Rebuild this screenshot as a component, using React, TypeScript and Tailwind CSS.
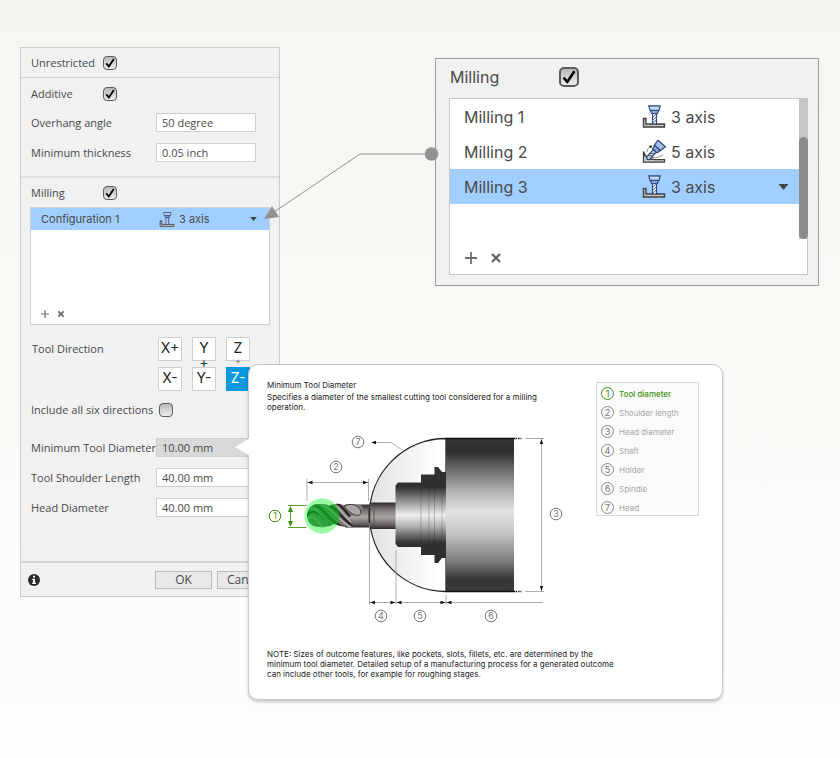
import React from "react";

const lucida = "font-['Open_Sans','Noto_Sans',sans-serif]";
const inter = "font-['Inter','Liberation_Sans',sans-serif]";

function ThreeAxisIcon({ className }: { className: string }) {
  return (
    <svg viewBox="0 0 24 23" className={className} aria-hidden="true">
      <path d="M1.500 13.500h2.500v5.500h18.500v3H1.500z" fill="#c9c9c9" stroke="#404040" strokeWidth="1.400" />
      <path d="M10.500 8h4v11h-4z" fill="#e9eef8" stroke="#34497a" strokeWidth="1.200" />
      <path d="M11 18l3-3M11 15l3-3M11 12l3-3" stroke="#3c5586" strokeWidth="0.800" />
      <path d="M8.500 5.500h8l-1 3h-6z" fill="#86a9d9" stroke="#34497a" strokeWidth="1.200" />
      <path d="M6.800 0.800h11.400l-1.200 4.700H8z" fill="#a3c1e8" stroke="#34497a" strokeWidth="1.200" />
      <path d="M8 2.800h9" stroke="#dfeafa" />
    </svg>
  );
}

function FiveAxisIcon({ className }: { className: string }) {
  return (
    <svg viewBox="0 0 24 23" className={className} aria-hidden="true">
      <path d="M1.500 11.500c1 5 5 8 11 8.200h10v2.500H1.500z" fill="#d0d0d0" stroke="#404040" strokeWidth="1.300" />
      <path d="M10 17.500c5 .500 9-.500 11-3M5 12c0-3 2-5 5-6" fill="none" stroke="#777" strokeWidth="0.800" />
      <path d="M7.500 5.500h2.200v2.200H7.500z" fill="#222" />
      <g transform="translate(5.500 19) rotate(42)">
        <path d="M-2-11h4V-1l-2 1.500L-2-1z" fill="#c9d8ef" stroke="#2d456f" strokeWidth="1.200" />
        <path d="M-1.500-3l3-3M-1.500-6l3-3" stroke="#2d456f" strokeWidth="0.800" />
        <path d="M-4-15h8l-1 4h-6z" fill="#86a9d9" stroke="#2d456f" strokeWidth="1.200" />
        <path d="M-5-21H5l-1 6h-8z" fill="#a3c1e8" stroke="#2d456f" strokeWidth="1.200" />
      </g>
    </svg>
  );
}

function Check({ id, checked, large }: { id: string; checked?: boolean; large?: boolean }) {
  return (
    <span className={large ? "grid size-5" : "grid size-[14px]"}>
      <input
        id={id}
        type="checkbox"
        defaultChecked={checked}
        className={
          "peer size-full appearance-none border-[#5c5c5c] bg-linear-to-b from-[#b9b9b9] to-[#ededed] [grid-area:1/1] " +
          (large ? "rounded-[5px] border-2" : "rounded-[4px] border")
        }
      />
      <svg viewBox="0 0 14 14" className="pointer-events-none invisible size-full [grid-area:1/1] peer-checked:visible" aria-hidden="true">
        <path d="M3.200 7.400l2.600 3L10.800 3" fill="none" stroke="#000" strokeWidth="1.800" />
      </svg>
    </span>
  );
}

function Field({ id, label, value, muted }: { id: string; label: string; value: string; muted?: boolean }) {
  return (
    <div className="flex items-center">
      <label htmlFor={id} className="w-[125px] shrink-0 whitespace-nowrap">{label}</label>
      <input
        id={id}
        defaultValue={value}
        className={"h-[19px] w-[100px] border border-[#cfcfcf] px-[5px] " + (muted ? "bg-[#d9d9d9]" : "bg-white")}
      />
    </div>
  );
}

function Caret({ className }: { className: string }) {
  return (
    <svg viewBox="0 0 10 6" className={className} aria-hidden="true">
      <path d="M0 0h10L5 6z" fill="#444" />
    </svg>
  );
}

function AddRemove({ large }: { large?: boolean }) {
  const size = large ? "size-3" : "size-2";
  return (
    <div className={large ? "flex gap-[13px]" : "flex gap-2"}>
      <button type="button" aria-label="Add">
        <svg viewBox="0 0 12 12" className={size}><path d="M6 0v12M0 6h12" stroke="#707070" strokeWidth="1.800" /></svg>
      </button>
      <button type="button" aria-label="Remove">
        <svg viewBox="0 0 12 12" className={size}><path d="M2 2l8 8M10 2l-8 8" stroke="#666" strokeWidth="2.400" /></svg>
      </button>
    </div>
  );
}

const directions = [
  { id: "x+", text: <>X+</> },
  { id: "y+", text: <>Y<span className="block text-[#1d4d35]">+</span></> },
  { id: "z+", text: <>Z<span className="block text-[8px] leading-[12px] text-[#555]">+</span></> },
  { id: "x-", text: <>X-</> },
  { id: "y-", text: <>Y-</> },
];

function SettingsPanel() {
  return (
    <form className={`w-[260px] shrink-0 border border-[#cbcbcb] bg-[#f1f1f1] text-[11px] leading-4 text-[#4a4a4a] ${lucida}`}>
      <section className="flex h-[30px] items-center border-b border-[#d4d4d4] px-[10px]">
        <label htmlFor="unrestricted" className="w-[72px]">Unrestricted</label>
        <Check id="unrestricted" checked />
      </section>

      <section className="flex flex-col gap-[11px] border-b-2 border-[#dfdfdf] px-[10px] pt-2 pb-[14px]">
        <div className="flex items-center">
          <label htmlFor="additive" className="w-[72px]">Additive</label>
          <Check id="additive" checked />
        </div>
        <Field id="overhang" label="Overhang angle" value="50 degree" />
        <Field id="thickness" label="Minimum thickness" value="0.05 inch" />
      </section>

      <section className="px-[9px] pt-[7px]">
        <div className="flex items-center px-px">
          <label htmlFor="milling" className="w-[72px]">Milling</label>
          <Check id="milling" checked />
        </div>
        <div className={`mt-[6px] flex h-[118px] flex-col justify-between border border-[#cfcfcf] bg-white ${inter}`}>
          <div className="flex h-[22px] items-center bg-[#a0cfff] pr-[12px] pl-[10px]">
            <span className="w-[118px]">Configuration 1</span>
            <ThreeAxisIcon className="mr-1 h-[15px] w-4" />
            <span className="flex-1">3 axis</span>
            <button type="button" aria-label="Choose axis"><Caret className="h-1 w-[7px]" /></button>
          </div>
          <div className="px-[10px] pb-[6px]"><AddRemove /></div>
        </div>

        <div role="group" aria-labelledby="direction" className="mt-[12px] flex px-[2px]">
          <span id="direction" className="w-[126px] pt-1">Tool Direction</span>
          <div className={`grid grid-cols-[24px_24px_24px] gap-x-[10px] gap-y-[6px] text-[14px] leading-[14px] text-[#222] ${inter}`}>
            {directions.map((d) => (
              <button key={d.id} type="button" className="flex h-6 w-6 flex-col border border-[#cfcfcf] bg-white pt-[3px] text-center whitespace-nowrap">
                <span className="w-full">{d.text}</span>
              </button>
            ))}
            <button type="button" className="flex h-6 w-6 flex-col bg-[#0a98e0] pt-[4px] text-center text-white">
              <span className="w-full">Z-</span>
            </button>
          </div>
        </div>

        <div className="mt-[11px] flex items-center px-px">
          <label htmlFor="six" className="w-[128px] whitespace-nowrap">Include all six directions</label>
          <Check id="six" />
        </div>

        <div className="mt-[20px] flex flex-col gap-[11px] px-px pb-[44px]">
          <Field id="diameter" label="Minimum Tool Diameter" value="10.00 mm" muted />
          <Field id="shoulder" label="Tool Shoulder Length" value="40.00 mm" />
          <Field id="head" label="Head Diameter" value="40.00 mm" />
        </div>
      </section>

      <footer className="flex h-[35px] items-center border-t-2 border-[#d4d4d4] pl-[7px]">
        <svg viewBox="0 0 12 12" className="size-3" role="img" aria-label="Information">
          <circle cx="6" cy="6" r="6" fill="#2b2b2b" />
          <path d="M5 1.800h2v1.800H5zM4.200 4.800H7v3.800h.900V10H4.200V8.600H5V6.100h-.800z" fill="#fff" />
        </svg>
        <button type="button" className="ml-[115px] h-[18px] w-[57px] border border-[#bdbdbd] bg-[#e8e8e8] text-xs leading-4">OK</button>
        <button type="button" className="ml-[5px] h-[18px] w-[57px] border border-[#bdbdbd] bg-[#e8e8e8] text-xs leading-4">Cancel</button>
      </footer>
    </form>
  );
}

const millings = [
  { name: "Milling 1", axis: "3 axis" },
  { name: "Milling 2", axis: "5 axis" },
  { name: "Milling 3", axis: "3 axis" },
];

function MillingPanel() {
  return (
    <section className={`mt-[11px] ml-[155px] min-w-[384px] flex-1 border border-[#9b9b9b] bg-[#f1f1f1] pr-[10px] pb-[10px] pl-[13px] text-base text-[#4a4a4a] ${inter}`}>
      <div className="flex h-[39px] items-center pb-1">
        <label htmlFor="milling-detail" className="w-[110px] px-px">Milling</label>
        <Check id="milling-detail" checked large />
      </div>
      <div className="flex h-[177px] border border-r-0 border-[#c8c8c8] bg-white">
        <div className="flex flex-1 flex-col">
          <ul>
            {millings.map((m) => (
              <li
                key={m.name}
                className={"flex h-[35px] items-center pr-[10px] pl-[14px] " + (m.name === "Milling 3" ? "bg-[#a0cfff]" : "")}
              >
                <span className="w-[178px]">{m.name}</span>
                {m.axis === "5 axis" ? <FiveAxisIcon className="h-[23px] w-6" /> : <ThreeAxisIcon className="h-[23px] w-6" />}
                <span className="ml-[5px] flex-1">{m.axis}</span>
                {m.name === "Milling 3" && (
                  <button type="button" aria-label="Choose axis"><Caret className="h-[6px] w-[11px]" /></button>
                )}
              </li>
            ))}
          </ul>
          <div className="mt-auto px-[15px] pb-[10px]"><AddRemove large /></div>
        </div>
        <div className="flex w-[9px] flex-col border-r border-[#c8c8c8]">
          <div className="h-[140px] w-[9px] shrink-0 bg-[#c4c6c7] pt-[38px]">
            <div className="h-[102px] rounded-full bg-[#8b8b8b]" />
          </div>
        </div>
      </div>
    </section>
  );
}

function Mark({ x, y, n, color = "#777" }: { x: number; y: number; n: number; color?: string }) {
  return (
    <g>
      <circle cx={x} cy={y} r="5.800" fill="none" stroke={color} />
      <text x={x} y={y + 3.200} textAnchor="middle" fontSize="9" fill={color}>{n}</text>
    </g>
  );
}

function ToolDiagram() {
  return (
    <svg viewBox="267 430 300 196" className={`h-[196px] w-[300px] ${inter}`} role="img" aria-label="Milling tool dimensions">
      <defs>
        <linearGradient id="steel" x1="0" y1="0" x2="0" y2="1">
          <stop offset="0" stopColor="#333" />
          <stop offset="0.090" stopColor="#2e2e2e" />
          <stop offset="0.200" stopColor="#686868" />
          <stop offset="0.340" stopColor="#b0b0b0" />
          <stop offset="0.480" stopColor="#e3e3e3" />
          <stop offset="0.620" stopColor="#c4c4c4" />
          <stop offset="0.800" stopColor="#7c7c7c" />
          <stop offset="0.920" stopColor="#363636" />
          <stop offset="1" stopColor="#383838" />
        </linearGradient>
        <linearGradient id="holder" gradientUnits="userSpaceOnUse" x1="0" y1="483" x2="0" y2="547">
          <stop offset="0" stopColor="#303030" />
          <stop offset="0.060" stopColor="#303030" />
          <stop offset="0.300" stopColor="#999" />
          <stop offset="0.500" stopColor="#f0f0f0" />
          <stop offset="0.680" stopColor="#b0b0b0" />
          <stop offset="0.930" stopColor="#343434" />
          <stop offset="1" stopColor="#303030" />
        </linearGradient>
        <linearGradient id="shank" x1="0" y1="0" x2="0" y2="1">
          <stop offset="0" stopColor="#2d2a2a" />
          <stop offset="0.250" stopColor="#797373" />
          <stop offset="0.550" stopColor="#aaa4a3" />
          <stop offset="0.850" stopColor="#665f5f" />
          <stop offset="1" stopColor="#2b2828" />
        </linearGradient>
        <linearGradient id="dome" x1="0" y1="0" x2="1" y2="0">
          <stop offset="0" stopColor="#e2e2e2" />
          <stop offset="0.900" stopColor="#fff" />
        </linearGradient>
        <clipPath id="flutes"><path d="M319 504q8 0 10 2q6-3 11-2q6 2 9 1h12q4 4 0 8l-13 4l6 10h-7q-8-1-13-3q-7 4-14 3q-12 0-13-11.500q1-11.500 12-11.500z" /></clipPath>
      </defs>

      <path d="M446 438.500a76.500 76.500 0 0 0 0 153z" fill="url(#dome)" stroke="#222" strokeWidth="1.300" />
      <path d="M345 504.500h25v23h-25z" fill="url(#shank)" />
      <path d="M370 502.500h26v26.500h-26z" fill="url(#shank)" />
      <path d="M374 502.500v26.500M370 502.500v26.500" stroke="#4b4646" strokeWidth="0.700" />
      <g clipPath="url(#flutes)">
        <path d="M306 502h60v28h-60z" fill="#817b7a" />
        <path d="M306 516c8-12 22 4 28 12M312 504c12 2 18 20 34 24M324 503c12 2 18 18 32 25M336 503c8 3 14 16 24 24" fill="none" stroke="#292727" strokeWidth="2.400" />
        <path d="M306 520c8-8 12 2 18 9M309 508c10 0 18 15 28 20M321 504c11 4 18 17 30 23M333 504c9 4 13 16 24 23" fill="none" stroke="#c2bdbb" strokeWidth="1.200" />
      </g>
      <path d="M344 506c6-3 15-2 17 6c0 6-10 4-17-6z" fill="#aaa4a2" stroke="#393535" strokeWidth="0.900" />
      <circle cx="322" cy="516" r="17.500" fill="#00f01c" fillOpacity="0.400" />
      <g clipPath="url(#flutes)"><circle cx="322" cy="516" r="17.500" fill="#0b9a1e" fillOpacity="0.450" /></g>
      <path d="M369.500 508a77 77 0 0 0 0 15" fill="none" stroke="#222" strokeWidth="1.300" />

      <path d="M398 482.500h23v-8h13.500V467h3.500l4 5h4v86h-4l-4 5h-3.500v-8H421v-8h-23l-2.500-3v-58.500z" fill="url(#holder)" />
      <path d="M421 483v64M429 475v80M434.500 475v80M442 472v86" stroke="#222" strokeWidth="0.600" opacity="0.400" />
      <path d="M446 438h68v154h-68z" fill="url(#steel)" />
      <path d="M446 438.500h69M446 591.500h69" stroke="#111" strokeWidth="1.400" />
      <path d="M515.500 438.500h6M515.500 591.500h6" stroke="#111" strokeWidth="1.400" strokeDasharray="1.500 1" />

      <g fill="none" stroke="#8e8e8e" strokeWidth="0.700">
        <path d="M374 442.500h17l12 8M307 479v22M368.500 479v22M307 482.500h61M369.500 523v82M396 550v55M446 595v10M369.500 602.500H543M541.500 438.500v153M525 438.500h19M525 591.500h19" />
      </g>
      <g fill="#111">
        <path d="M371 442.500l5-1.700v3.400zM307.500 482.500l5-1.700v3.400zM368 482.500l-5-1.700v3.400zM370 602.500l5-1.700v3.400zM395.500 602.500l-5-1.700v3.400zM396.500 602.500l5-1.700v3.400zM445.500 602.500l-5-1.700v3.400zM446.500 602.500l5-1.700v3.400zM541.500 439l-1.700 5h3.400zM541.500 591l-1.700-5h3.400z" />
      </g>
      <path d="M288 505.500h18.500M288 527.500h18.500M290.500 508v17" stroke="#56a02a" />
      <path d="M290.500 506l-2.500 6h5zM290.500 527l-2.500-6h5z" fill="#3f920d" />

      <Mark x={275} y={516} n={1} color="#3f920d" />
      <Mark x={336} y={467} n={2} />
      <Mark x={556} y={514} n={3} />
      <Mark x={381} y={616} n={4} />
      <Mark x={420} y={616} n={5} />
      <Mark x={491} y={616} n={6} />
      <Mark x={358} y={442} n={7} />
    </svg>
  );
}

const legend = ["Tool diameter", "Shoulder length", "Head diameter", "Shaft", "Holder", "Spindle", "Head"];

function DiameterTooltip() {
  return (
    <aside
      role="tooltip"
      className={`absolute top-[364px] left-[248px] w-[475px] rounded-[10px] border border-[#c9c9c9] bg-white px-[18px] pt-[15px] pb-[20px] text-[8px] leading-[10px] text-[#222] shadow-[0_2px_3px_rgba(0,0,0,0.22)] ${inter}`}
    >
      <svg viewBox="0 0 15 18" className="absolute top-[73px] -left-[14px] h-[18px] w-[15px]" aria-hidden="true">
        <path d="M15 0v18L0 9z" fill="#fff" />
      </svg>
      <div className="flex items-start justify-between">
        <div className="w-[302px]">
          <h2>Minimum Tool Diameter</h2>
          <p className="mt-[2px]">Specifies a diameter of the smallest cutting tool considered for a milling<br />operation.</p>
          <div className="mt-[18px]"><ToolDiagram /></div>
        </div>
        <ol className="mt-[2px] mr-[5px] flex h-[134px] w-[103px] flex-col justify-between border border-[#d9d9d9] bg-[#fbfbfb] pt-[4px] pb-px pl-[4px]">
          {legend.map((name, i) => (
            <li key={name} className={"flex items-center gap-[5px] " + (i === 0 ? "font-medium text-[#3f920d]" : "text-[#a5a5a5]")}>
              <span className={"flex size-[13px] items-center justify-center rounded-full border text-[9px] font-normal " + (i === 0 ? "border-[#3f920d]" : "border-[#888] text-[#777]")}>{i + 1}</span>
              {name}
            </li>
          ))}
        </ol>
      </div>
      <p className="mt-[23px]">
        NOTE: Sizes of outcome features, like pockets, slots, fillets, etc. are determined by the<br />
        minimum tool diameter. Detailed setup of a manufacturing process for a generated outcome<br />
        can include other tools, for example for roughing stages.
      </p>
    </aside>
  );
}

export default function App() {
  return (
    <main className="relative min-h-screen bg-linear-to-b from-[#f5f6f1] to-[#fdfdfc] px-5 pt-[47px] pr-[21px]">
      <div className="flex items-start">
        <SettingsPanel />
        <MillingPanel />
      </div>
      <svg viewBox="0 0 176 74" className="pointer-events-none absolute top-[147px] left-[263px] h-[74px] w-[176px]" aria-hidden="true">
        <path d="M168 7H97L11 65" fill="none" stroke="#929292" />
        <path d="M1 72l8-13 7 11z" fill="#929292" />
        <circle cx="168.500" cy="7" r="6.800" fill="#929292" />
      </svg>
      <DiameterTooltip />
    </main>
  );
}
